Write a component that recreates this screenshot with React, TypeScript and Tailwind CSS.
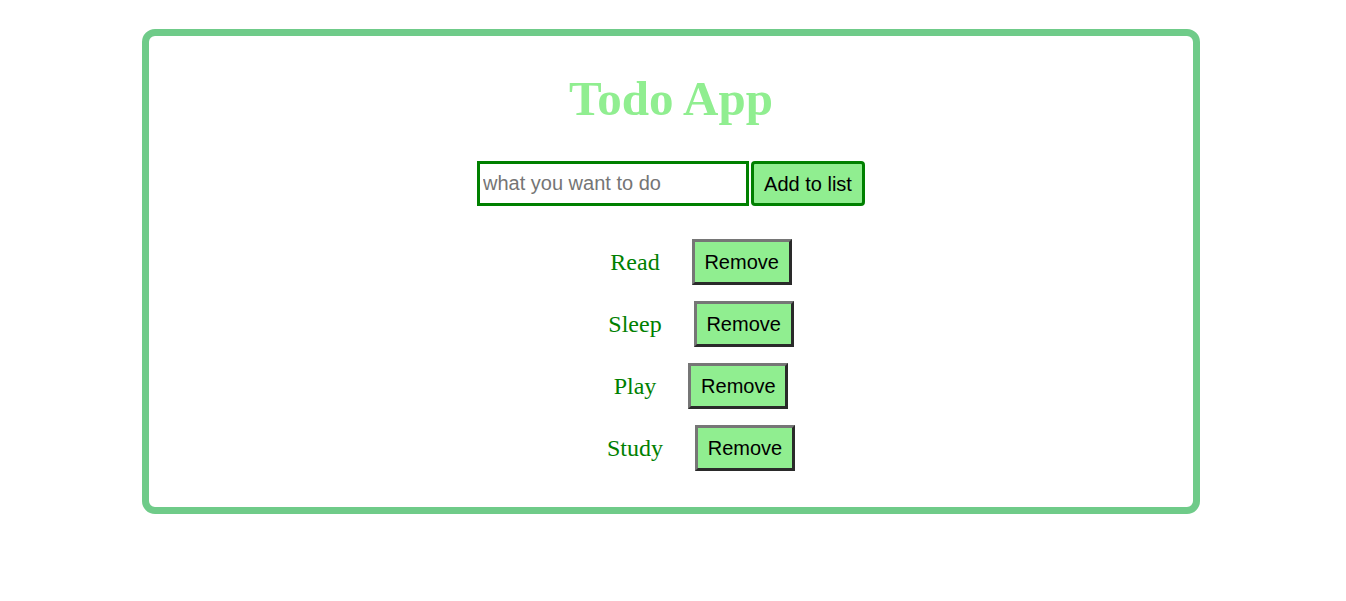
const todos = ["Read", "Sleep", "Play", "Study"]

export default function App() {
  return (
    <main className="min-h-[601px] bg-white pt-[29px]" style={{ fontFamily: '"Liberation Sans", Arial, sans-serif' }}>
      <div className="ml-[142px] w-[1058px] rounded-[13px] border-[7px] border-[#6fcb89] pb-[36px] pt-[35px] text-center">
        <h1 className="font-['Liberation_Serif',serif] text-[49px] font-bold leading-[56px] text-[#90ee90]">
          Todo App
        </h1>

        <div className="mt-[34px] flex justify-center">
          <input
            type="text"
            placeholder="what you want to do"
            className="h-[45px] w-[272px] border-[3px] border-[#008000] px-[3px] text-[20px] text-black outline-none placeholder:text-[#757575]"
          />
          <button className="ml-[2px] h-[45px] w-[114px] rounded-[4px] border-[3px] border-[#008000] bg-[#90ee90] text-[20px] text-black">
            Add to list
          </button>
        </div>

        <ul className="mt-[33px] flex flex-col items-center gap-[16px] pl-[60px]">
          {todos.map((t) => (
            <li key={t} className="flex items-center gap-[32px]">
              <span className="font-['Liberation_Serif',serif] text-[24px] text-[#008000]">{t}</span>
              <button className="h-[46px] w-[100px] border-[3px] border-t-[#767676] border-l-[#767676] border-b-[#2a2a2a] border-r-[#2a2a2a] bg-[#90ee90] text-[20px] text-black">
                Remove
              </button>
            </li>
          ))}
        </ul>
      </div>
    </main>
  )
}
